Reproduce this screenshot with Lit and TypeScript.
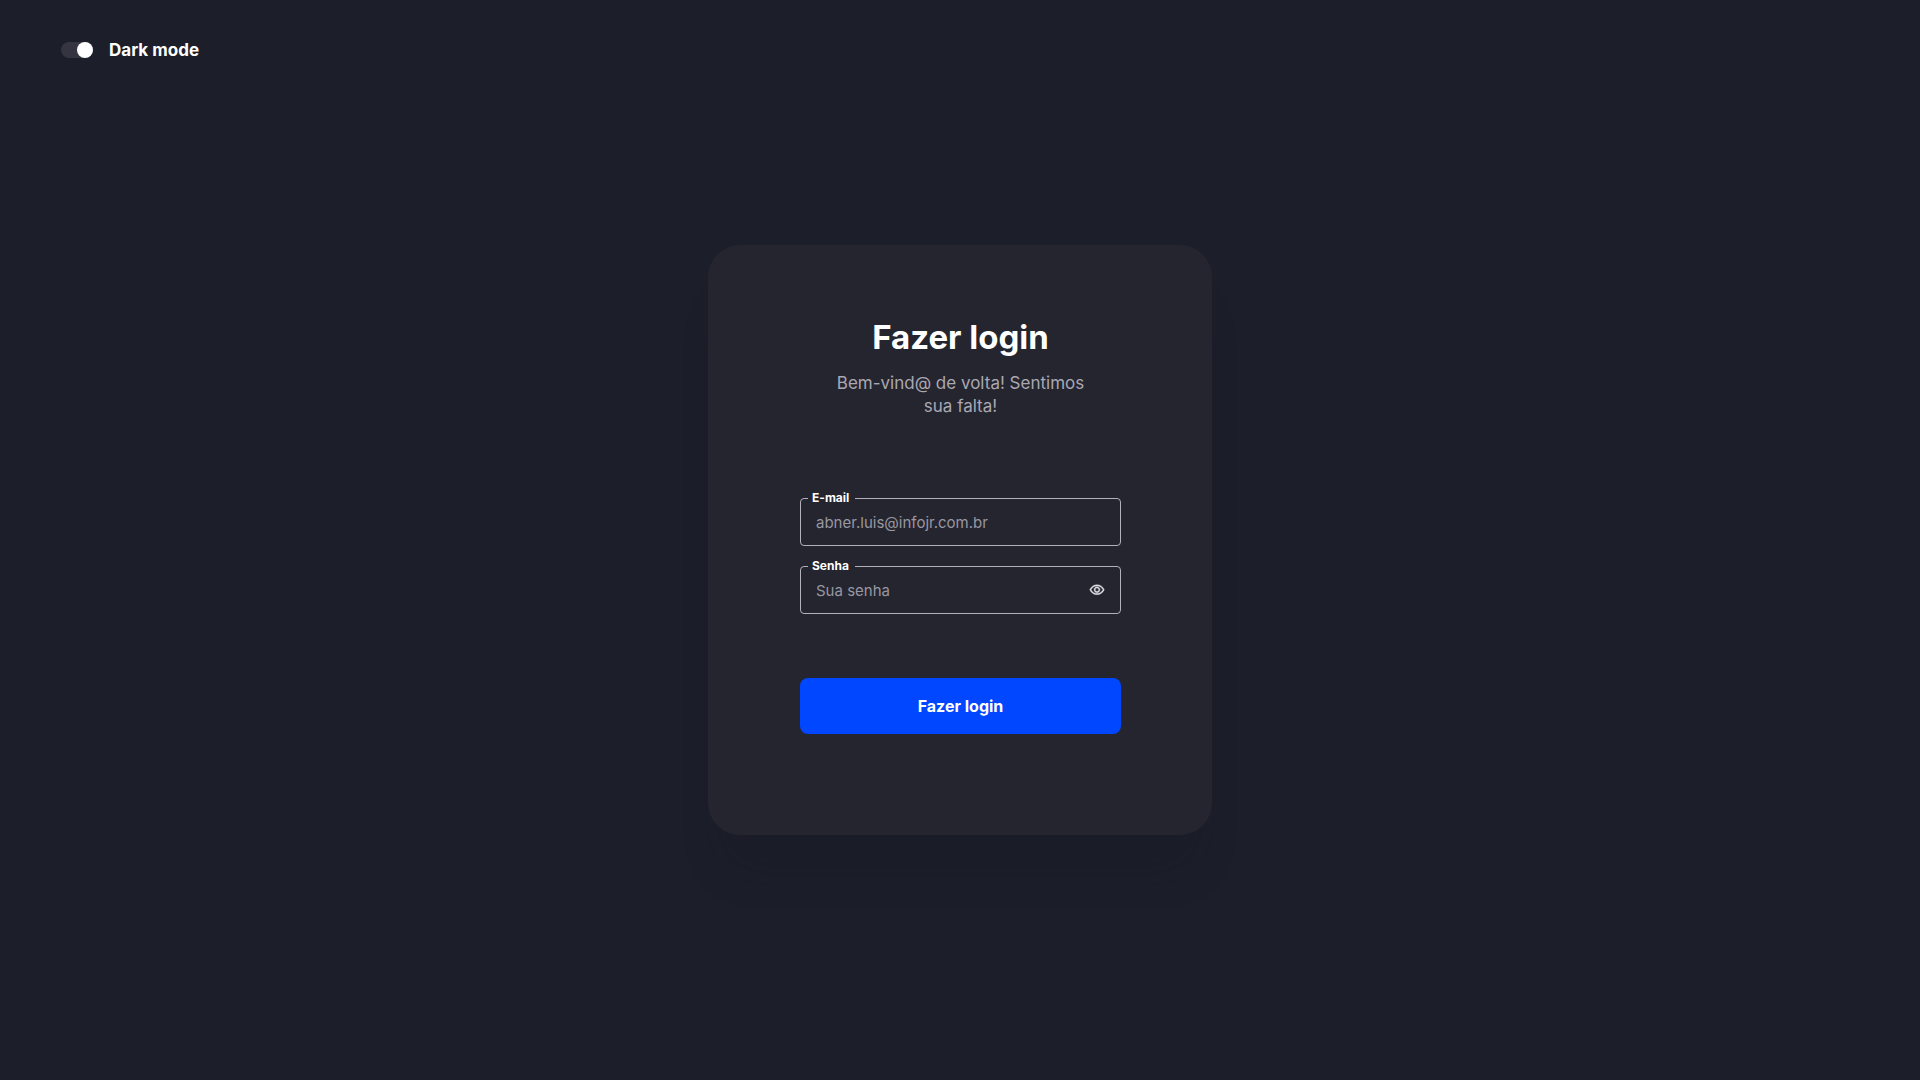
import { LitElement, html, css } from "lit";
import { customElement, state } from "lit/decorators.js";

@customElement("app-root")
export class AppRoot extends LitElement {
  @state() private dark = true;
  @state() private showPassword = false;

  static styles = css`
    :host {
      display: block;
      font-family: Inter, "Liberation Sans", sans-serif;
      color: #ffffff;
    }
    * {
      box-sizing: border-box;
    }
    .page {
      min-height: 100vh;
      display: grid;
      grid-template-rows: 1fr auto 1fr;
      justify-items: center;
      background: #1c1e2a;
    }
    .topbar {
      justify-self: start;
      align-self: start;
      padding: 38px 61px;
    }
    .theme {
      display: flex;
      align-items: center;
      gap: 16px;
      font-size: 17px;
      line-height: 24px;
      font-weight: 700;
      cursor: pointer;
    }
    .switch {
      appearance: none;
      display: flex;
      width: 32px;
      height: 16px;
      margin: 0;
      border-radius: 8px;
      background: #353541;
      cursor: pointer;
    }
    .switch::before {
      content: "";
      width: 16px;
      height: 16px;
      border-radius: 50%;
      background: #ffffff;
    }
    .switch:checked {
      justify-content: flex-end;
    }
    .card {
      width: 100%;
      max-width: 504px;
      padding: 72px 91px 101px 92px;
      border-radius: 32px;
      background: #25252f;
      box-shadow: 0 48px 48px -24px rgba(24, 28, 38, 0.3);
    }
    .intro {
      display: flex;
      flex-direction: column;
      align-items: center;
      gap: 15px;
      margin-bottom: 73px;
      text-align: center;
    }
    .title {
      margin: 0;
      font-size: 33px;
      line-height: 40px;
      font-weight: 700;
    }
    .subtitle {
      margin: 0;
      max-width: 272px;
      font-size: 17px;
      line-height: 23px;
      color: #a9a8b3;
    }
    .fields {
      display: flex;
      flex-direction: column;
      gap: 13px;
      margin-bottom: 64px;
    }
    .field {
      min-width: 0;
      margin: 0;
      padding: 0 15px 6px 7px;
      border: 1px solid #b1b0bb;
      border-radius: 4px;
    }
    .legend {
      padding: 0 6px 0 4px;
      font-size: 12px;
      line-height: 14px;
      font-weight: 700;
    }
    .row {
      display: flex;
      align-items: center;
      padding-left: 8px;
    }
    .input {
      flex: 1;
      min-width: 0;
      height: 34px;
      padding: 0;
      border: 0;
      outline: 0;
      background: transparent;
      color: #ffffff;
      font: inherit;
      font-size: 15px;
    }
    .input::placeholder {
      color: #9897a2;
      opacity: 1;
    }
    .eye {
      display: flex;
      padding: 0;
      border: 0;
      background: transparent;
      color: #dcdce4;
      cursor: pointer;
    }
    .submit {
      width: 100%;
      height: 56px;
      padding: 0;
      border: 0;
      border-radius: 8px;
      background: #0047ff;
      color: #ffffff;
      font: inherit;
      font-size: 16px;
      font-weight: 700;
      cursor: pointer;
    }
  `;

  private toggleTheme(e: Event) {
    this.dark = (e.target as HTMLInputElement).checked;
  }

  render() {
    return html`
      <div class="page">
        <header class="topbar">
          <label class="theme" for="theme">
            <input
              class="switch"
              id="theme"
              type="checkbox"
              role="switch"
              .checked=${this.dark}
              @change=${this.toggleTheme}
            />
            <span>Dark mode</span>
          </label>
        </header>
        <main class="card">
          <div class="intro">
            <h1 class="title">Fazer login</h1>
            <p class="subtitle">Bem-vind@ de volta! Sentimos sua falta!</p>
          </div>
          <form @submit=${(e: Event) => e.preventDefault()}>
            <div class="fields">
              <fieldset class="field">
                <legend class="legend"><label for="email">E-mail</label></legend>
                <div class="row">
                  <input class="input" id="email" type="email" placeholder="abner.luis@infojr.com.br" />
                </div>
              </fieldset>
              <fieldset class="field">
                <legend class="legend"><label id="password-label" for="password">Senha</label></legend>
                <div class="row">
                  <input
                    class="input"
                    id="password"
                    type=${this.showPassword ? "text" : "password"}
                    placeholder="Sua senha"
                  />
                  <button
                    class="eye"
                    type="button"
                    aria-labelledby="password-label"
                    aria-pressed=${this.showPassword ? "true" : "false"}
                    @click=${() => (this.showPassword = !this.showPassword)}
                  >
                    <svg width="16" height="16" viewBox="0 0 24 24" fill="currentColor" aria-hidden="true">
                      <path
                        d="M12 6c3.79 0 7.17 2.13 8.82 5.5C19.17 14.87 15.79 17 12 17s-7.17-2.13-8.82-5.5C4.83 8.13 8.21 6 12 6m0-2C7 4 2.73 7.11 1 11.5 2.73 15.89 7 19 12 19s9.27-3.11 11-7.5C21.27 7.11 17 4 12 4zm0 5c1.38 0 2.5 1.12 2.5 2.5S13.38 14 12 14s-2.5-1.12-2.5-2.5S10.62 9 12 9m0-2c-2.48 0-4.5 2.02-4.5 4.5S9.52 16 12 16s4.5-2.02 4.5-4.5S14.48 7 12 7z"
                        stroke="currentColor"
                        stroke-width="0.5"
                      />
                    </svg>
                  </button>
                </div>
              </fieldset>
            </div>
            <button class="submit" type="submit">Fazer login</button>
          </form>
        </main>
      </div>
    `;
  }
}
